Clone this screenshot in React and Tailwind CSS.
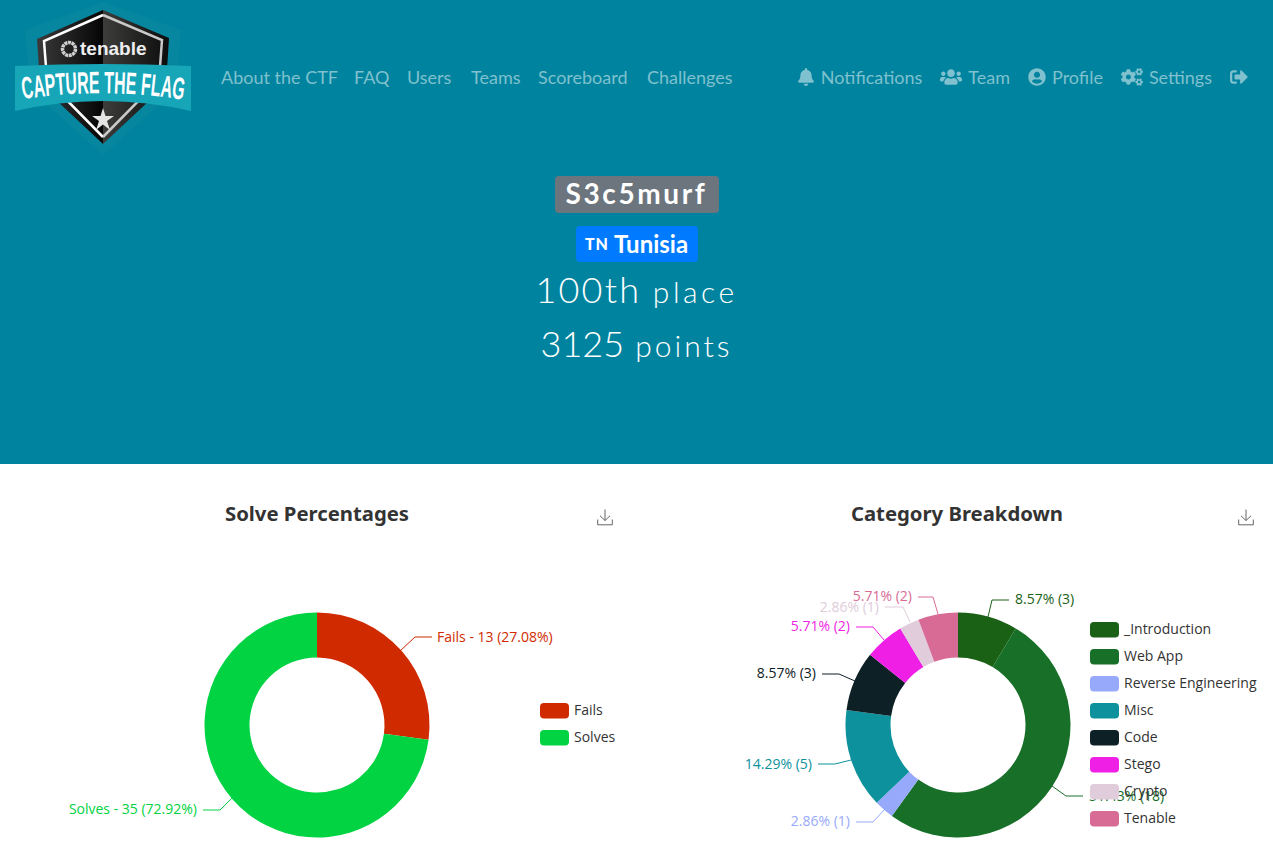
import { FaBell, FaUsers, FaUserCircle, FaCogs, FaSignOutAlt } from "react-icons/fa";

const NAV_LEFT = [
  { label: "About the CTF", className: "w-[115px]" },
  { label: "FAQ", className: "w-[35px]" },
  { label: "Users", className: "w-[46px]" },
  { label: "Teams", className: "w-[49px]" },
  { label: "Scoreboard", className: "w-[91px]" },
  { label: "Challenges", className: "w-[87px]" },
];
const NAV_RIGHT = [
  { label: "Notifications", icon: FaBell, iconClass: "h-[18px] w-[18px]" },
  { label: "Team", icon: FaUsers, iconClass: "h-[18px] w-[22px]" },
  { label: "Profile", icon: FaUserCircle, iconClass: "h-[18px] w-[18px]" },
  { label: "Settings", icon: FaCogs, iconClass: "h-[18px] w-[22px]" },
];

const SOLVES = {
  cx: 317,
  slices: [
    { value: 13, color: "#d02a00" },
    { value: 35, color: "#02d342" },
  ],
  labels: [
    { text: "Fails - 13 (27.08%)", x: 437, y: 642, color: "#d02a00", line: "400,651 415,637 432,637" },
    { text: "Solves - 35 (72.92%)", x: 197, y: 814, anchor: "end", color: "#02d342", line: "232,798 220,810 203,810" },
  ],
  legend: [
    { name: "Fails", color: "#d02a00" },
    { name: "Solves", color: "#02d342" },
  ],
  legendX: 540,
  legendY: 703,
};

const CATEGORIES = {
  cx: 958,
  slices: [
    { value: 3, color: "#1a6116" },
    { value: 18, color: "#176f28" },
    { value: 1, color: "#97a9fb" },
    { value: 5, color: "#0d919c" },
    { value: 3, color: "#0d2025" },
    { value: 2, color: "#ef1fe6" },
    { value: 1, color: "#e0ccda" },
    { value: 2, color: "#d76b96" },
  ],
  labels: [
    { text: "8.57% (3)", x: 1015, y: 604, color: "#1a6116", line: "988,617 992,600 1009,600" },
    { text: "51.43% (18)", x: 1089, y: 801, color: "#176f28", line: "1052,786 1066,796 1083,796" },
    { text: "2.86% (1)", x: 850, y: 826, anchor: "end", color: "#97a9fb", line: "884,810 873,822 856,822" },
    { text: "14.29% (5)", x: 812, y: 769, anchor: "end", color: "#0d919c", line: "851,760 835,764 818,764" },
    { text: "8.57% (3)", x: 816, y: 678, anchor: "end", color: "#0d2025", line: "855,681 839,674 822,674" },
    { text: "5.71% (2)", x: 850, y: 631, anchor: "end", color: "#ef1fe6", line: "884,640 873,627 856,627" },
    { text: "2.86% (1)", x: 879, y: 612, anchor: "end", color: "#e0ccda", line: "910,622 903,607 885,607" },
    { text: "5.71% (2)", x: 912, y: 601, anchor: "end", color: "#d76b96", line: "938,614 933,597 918,597" },
  ],
  legend: [
    { name: "_Introduction", color: "#1a6116" },
    { name: "Web App", color: "#176f28" },
    { name: "Reverse Engineering", color: "#97a9fb" },
    { name: "Misc", color: "#0d919c" },
    { name: "Code", color: "#0d2025" },
    { name: "Stego", color: "#ef1fe6" },
    { name: "Crypto", color: "#e0ccda" },
    { name: "Tenable", color: "#d76b96" },
  ],
  legendX: 1090,
  legendY: 622,
};

function slicePath(cx, cy, outer, inner, start, end) {
  const point = (r, a) => `${cx + r * Math.sin(a)} ${cy - r * Math.cos(a)}`;
  const large = end - start > Math.PI ? 1 : 0;
  return `M${point(outer, start)}A${outer} ${outer} 0 ${large} 1 ${point(outer, end)}L${point(inner, end)}A${inner} ${inner} 0 ${large} 0 ${point(inner, start)}Z`;
}

function Donut({ chart, viewBox, className }) {
  const total = chart.slices.reduce((sum, s) => sum + s.value, 0);
  let angle = 0;
  const font = { fontFamily: '"Open Sans", sans-serif' };

  return (
    <svg viewBox={viewBox} className={className} style={font}>
      {chart.slices.map((s) => {
        const start = angle;
        angle += (s.value / total) * Math.PI * 2;
        return <path key={s.color} d={slicePath(chart.cx, 725, 112.5, 67.5, start, angle)} fill={s.color} />;
      })}
      {chart.labels.map((l) => (
        <g key={l.text + l.x}>
          <polyline points={l.line} fill="none" stroke={l.color} strokeWidth="1" />
          <text x={l.x} y={l.y} fontSize="14" fill={l.color} textAnchor={l.anchor || "start"}>
            {l.text}
          </text>
        </g>
      ))}
      {chart.legend.map((item, i) => (
        <g key={item.name}>
          <rect x={chart.legendX} y={chart.legendY + i * 27} width="29" height="15.5" rx="4" fill={item.color} />
          <text x={chart.legendX + 34} y={chart.legendY + i * 27 + 11.5} fontSize="14" fill="#333">
            {item.name}
          </text>
        </g>
      ))}
    </svg>
  );
}

function DownloadIcon() {
  return (
    <svg viewBox="0 0 16 17" className="h-[17px] w-4" fill="none" stroke="#666" strokeWidth="1">
      <path d="M8 0.5V11.5M3 6.8L8 11.5L13 6.8M0.7 10.5V15.8H15.3V10.5" />
    </svg>
  );
}

function Logo() {
  return (
    <svg viewBox="0 0 210 160" className="h-40 w-[210px] shrink-0">
      <defs>
        <linearGradient id="shieldLeft" x1="0" x2="1" y1="0" y2="0">
          <stop offset="0" stopColor="#3a3a3a" />
          <stop offset="1" stopColor="#050505" />
        </linearGradient>
        <linearGradient id="shieldRight" x1="0" x2="1" y1="0" y2="0">
          <stop offset="0" stopColor="#3d3d3b" />
          <stop offset="1" stopColor="#0c0c0c" />
        </linearGradient>
      </defs>
      <path d="M103 2L181 30L176 90L103 155L30 90L25 30Z" fill="#06879f" />
      <path d="M103 10V144L40 85L37 39Z" fill="url(#shieldLeft)" />
      <path d="M103 10V144L166 85L169 38Z" fill="url(#shieldRight)" />
      <path d="M103 15L44 41L47 80L103 137" fill="none" stroke="#fff" strokeWidth="2.5" />
      <path d="M103 15L162 40L159 80L103 137" fill="none" stroke="#c9c9c9" strokeWidth="2.5" />
      <circle cx="69" cy="49" r="6.5" fill="none" stroke="#cfcfcf" strokeWidth="3.5" strokeDasharray="3 0.6" />
      <text x="80" y="55" fontSize="19" fontWeight="700" fill="#eee" style={{ fontFamily: '"Liberation Sans", sans-serif' }}>
        tenable
      </text>
      <path d="M15 66Q103 62 191 66V111Q103 91 15 111Z" fill="#17a5b8" />
      <path id="bannerCurve" d="M23 99Q103 87 184 100" fill="none" />
      <text fontSize="31" fontWeight="700" fill="#fff" style={{ fontFamily: '"Liberation Sans Narrow", "Liberation Sans", sans-serif' }}>
        <textPath href="#bannerCurve" textLength="161" lengthAdjust="spacingAndGlyphs">
          CAPTURE THE FLAG
        </textPath>
      </text>
      <path d="M103 108L105.500 116H114L107 121L110 130L103 124.500L96 130L99 121L92 116H100.500Z" fill="#e4e4e4" />
    </svg>
  );
}

function ChartHeader({ title, className }) {
  return (
    <div className={`grid grid-cols-[1fr_auto_1fr] items-center ${className}`}>
      <span />
      <h3 className="text-[20.3px] leading-7 font-bold text-[#333] [font-family:'Noto_Sans',sans-serif]">{title}</h3>
      <span className="justify-self-end pt-[9px]">
        <DownloadIcon />
      </span>
    </div>
  );
}

export default function App() {
  return (
    <div className="min-h-screen overflow-hidden bg-white [font-family:Lato,sans-serif]">
      <header className="h-[464px] bg-[#00839e]">
        <nav className="flex items-start text-[18px] text-[#7fc1ce]">
          <Logo />
          <ul className="mt-[64px] ml-[11px] flex gap-[18px] leading-[26px] whitespace-nowrap">
            {NAV_LEFT.map((item) => (
              <li key={item.label} className={item.className}>
                {item.label}
              </li>
            ))}
          </ul>
          <ul className="mt-[64px] ml-auto mr-[25px] flex items-center gap-[18px] leading-[26px]">
            {NAV_RIGHT.map(({ label, icon: Icon, iconClass }) => (
              <li key={label} className="flex items-center gap-[6px]">
                <Icon className={iconClass} />
                {label}
              </li>
            ))}
            <li>
              <FaSignOutAlt className="text-[18px]" />
            </li>
          </ul>
        </nav>

        <div className="mt-4 flex flex-col items-center text-white">
          <h1 className="flex h-[37px] w-[164px] items-center justify-center rounded-[4px] bg-[#6c757d] pb-1 text-[28px] font-bold tracking-[2.6px]">
            S3c5murf
          </h1>
          <div className="mt-[13px] flex h-9 w-[122px] items-center justify-center gap-[5px] rounded-[4px] bg-[#007bff] font-bold">
            <span className="text-[16px] font-black tracking-[1px]">TN</span>
            <span className="text-[24px]">Tunisia</span>
          </div>
          <p className="mt-[5px] text-[30px] leading-[45px] font-light tracking-[3.5px]">
            <span className="text-[36px] tracking-[2.2px]">100th</span> place
          </p>
          <p className="mt-[7px] text-[30px] leading-[45px] font-light tracking-[3px]">
            <span className="text-[36px] tracking-[0px]">3125</span> points
          </p>
        </div>
      </header>

      <section className="flex h-[401px] gap-[7px]">
        <div className="w-[634px] shrink-0">
          <ChartHeader title="Solve Percentages" className="mt-[35px] pr-[21px] pl-[21px]" />
          <Donut chart={SOLVES} viewBox="0 570 634 280" className="mt-[43px] h-[280px] w-[634px]" />
        </div>
        <div className="w-[632px] shrink-0">
          <ChartHeader title="Category Breakdown" className="mt-[35px] pr-[19px] pl-[19px]" />
          <Donut chart={CATEGORIES} viewBox="641 570 632 280" className="mt-[43px] h-[280px] w-[632px]" />
        </div>
      </section>
    </div>
  );
}
